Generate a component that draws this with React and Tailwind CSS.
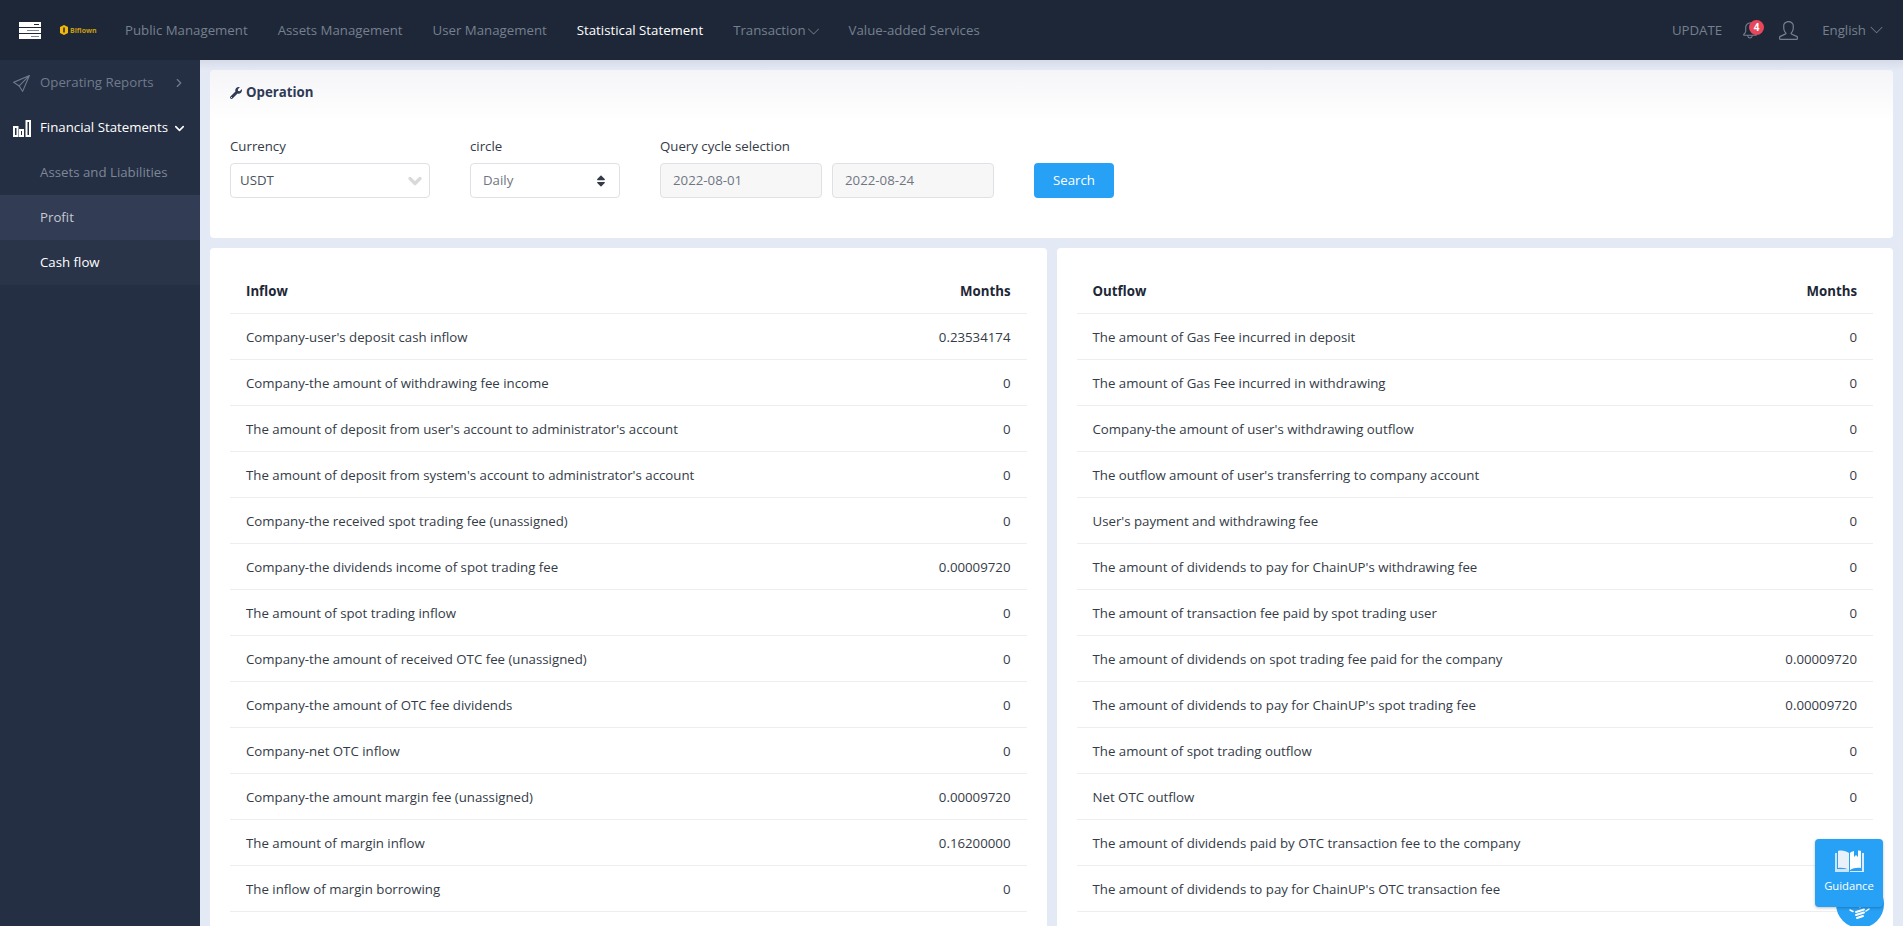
import React from "react";
import { ChevronDown, ChevronRight } from "lucide-react";
import { FaWrench, FaSort } from "react-icons/fa";
import { SlBell, SlUser, SlPaperPlane, SlArrowDown } from "react-icons/sl";

const navItems = [
  { label: "Public Management" },
  { label: "Assets Management" },
  { label: "User Management" },
  { label: "Statistical Statement", active: true },
  { label: "Transaction", arrow: true },
  { label: "Value-added Services" },
];

const inflow = [
  ["Company-user's deposit cash inflow", "0.23534174"],
  ["Company-the amount of withdrawing fee income", "0"],
  ["The amount of deposit from user's account to administrator's account", "0"],
  ["The amount of deposit from system's account to administrator's account", "0"],
  ["Company-the received spot trading fee (unassigned)", "0"],
  ["Company-the dividends income of spot trading fee", "0.00009720"],
  ["The amount of spot trading inflow", "0"],
  ["Company-the amount of received OTC fee (unassigned)", "0"],
  ["Company-the amount of OTC fee dividends", "0"],
  ["Company-net OTC inflow", "0"],
  ["Company-the amount margin fee (unassigned)", "0.00009720"],
  ["The amount of margin inflow", "0.16200000"],
  ["The inflow of margin borrowing", "0"],
];

const outflow = [
  ["The amount of Gas Fee incurred in deposit", "0"],
  ["The amount of Gas Fee incurred in withdrawing", "0"],
  ["Company-the amount of user's withdrawing outflow", "0"],
  ["The outflow amount of user's transferring to company account", "0"],
  ["User's payment and withdrawing fee", "0"],
  ["The amount of dividends to pay for ChainUP's withdrawing fee", "0"],
  ["The amount of transaction fee paid by spot trading user", "0"],
  ["The amount of dividends on spot trading fee paid for the company", "0.00009720"],
  ["The amount of dividends to pay for ChainUP's spot trading fee", "0.00009720"],
  ["The amount of spot trading outflow", "0"],
  ["Net OTC outflow", "0"],
  ["The amount of dividends paid by OTC transaction fee to the company", "0"],
  ["The amount of dividends to pay for ChainUP's OTC transaction fee", "0"],
];

function StatTable({ title, rows }) {
  return (
    <div className="flex-1 bg-white rounded-[4px] p-5">
      <div className="flex justify-between items-center h-[46px] pt-[2px] px-[16px] border-b border-[#eceef1] font-bold text-[#1d2736]">
        <span>{title}</span>
        <span>Months</span>
      </div>
      {rows.map((row) => (
        <div
          key={row[0]}
          className="flex justify-between items-center h-[46px] pt-[2px] px-[16px] border-b border-[#eceef1] text-[#343b47]"
        >
          <span>{row[0]}</span>
          <span>{row[1]}</span>
        </div>
      ))}
    </div>
  );
}

export default function App() {
  return (
    <div className="relative h-screen overflow-hidden bg-[#e4eaf5] font-['Open_Sans',sans-serif] text-[13.25px]">
      {/* header */}
      <div className="flex items-center h-[60px] bg-[#1e2737] text-[#75808f]">
        <div className="w-[22px] ml-[19px] flex flex-col gap-[1px]">
          <svg width="22" height="17" viewBox="0 0 22 17">
            <rect x="0" y="0" width="22" height="5" fill="#fff" />
            <rect x="0" y="6" width="22" height="5" fill="#fff" />
            <rect x="0" y="12" width="22" height="5" fill="#fff" />
            <rect x="15" y="2" width="5" height="1" fill="#1e2737" />
            <rect x="8" y="8" width="12" height="1" fill="#7f8794" />
            <rect x="12" y="14" width="8" height="1" fill="#7f8794" />
          </svg>
        </div>
        <div className="flex items-center ml-[19px] w-[65px] gap-[2px]">
          <svg width="8" height="10" viewBox="0 0 8 10">
            <path d="M4 0l4 2v6l-4 2-4-2V2z" fill="#f1b90c" />
            <rect x="3" y="2.500" width="2" height="5" fill="#5c4a10" />
          </svg>
          <span className="text-[7px] font-bold text-[#c99d12] leading-none">Biflown</span>
        </div>
        <div className="flex items-center gap-[30px] pt-[2px]">
          {navItems.map((item) => (
            <div key={item.label} className={`flex items-center ${item.active ? "text-white" : ""}`}>
              {item.label}
              {item.arrow && <SlArrowDown className="w-[11px] h-[11px] ml-[2px]" />}
            </div>
          ))}
        </div>
        <div className="flex items-center ml-auto">
          <span className="pt-[2px]">UPDATE</span>
          <div className="relative ml-[20px] w-[18px]">
            <SlBell className="w-[16px] h-[17px]" />
            <span className="absolute top-[-2px] left-[7px] w-[15px] h-[15px] rounded-full bg-[#e8465a] text-white text-[10px] font-bold flex items-center justify-center">
              4
            </span>
          </div>
          <SlUser className="ml-[19px] w-[19px] h-[19px]" />
          <span className="ml-[24px] pt-[2px]">English</span>
          <SlArrowDown className="ml-[4px] mr-[20px] w-[13px] h-[12px]" />
        </div>
      </div>

      <div className="flex h-[866px]">
        {/* sidebar */}
        <div className="w-[200px] bg-[#252f43]">
          <div className="flex items-center h-[45px] pl-[13px] pt-[1px] text-[#6f7b8d]">
            <SlPaperPlane className="w-[17px] h-[17px]" />
            <span className="ml-[10px]">Operating Reports</span>
            <ChevronRight className="ml-auto mr-[14px] w-[14px] h-[14px]" />
          </div>
          <div className="flex items-center h-[45px] pl-[13px] pt-[1px] text-white">
            <svg width="18" height="17" viewBox="0 0 18 17" fill="none" stroke="#fff" strokeWidth="2">
              <path d="M1 7h3.500v9H1zM7 10h3v6H7zM13.500 1H17v15h-3.500z" />
            </svg>
            <span className="ml-[9px] whitespace-nowrap">Financial Statements</span>
            <ChevronDown className="ml-auto mr-[13px] w-[15px] h-[15px]" strokeWidth={2.5} />
          </div>
          <div className="flex items-center h-[45px] pl-[40px] pt-[1px] text-[#7d8798]">Assets and Liabilities</div>
          <div className="flex items-center h-[45px] pl-[40px] pt-[1px] bg-[#323c54] text-[#c5cad3]">Profit</div>
          <div className="flex items-center h-[45px] pl-[40px] pt-[1px] bg-[#2a3449] text-white">Cash flow</div>
        </div>

        {/* main */}
        <div className="flex-1 px-[10px] pt-[10px] bg-gradient-to-b from-[#d6dbe7] to-[#e4eaf5] bg-[length:100%_10px] bg-no-repeat">
          <div className="h-[168px] bg-gradient-to-b from-[#f5f5f8] to-white to-[30%] rounded-[4px] p-5">
            <div className="flex items-center gap-[4px] h-[10px] mt-[-2px]">
              <FaWrench className="w-[12px] h-[12px] text-[#2f3a55]" />
              <span className="font-bold text-[#2f3a55]">Operation</span>
            </div>
            <div className="flex items-end gap-[40px] mt-[39px]">
              <div>
                <div className="text-[#343b47] mb-[6px]">Currency</div>
                <div className="flex items-center justify-between w-[200px] h-[35px] pl-[9px] pr-[4px] pt-[2px] bg-white border border-[#dfe1e6] rounded-[4px] text-[#4a5260]">
                  USDT
                  <ChevronDown className="w-[20px] h-[20px] text-[#d9d9d9]" strokeWidth={4} />
                </div>
              </div>
              <div>
                <div className="text-[#343b47] mb-[6px]">circle</div>
                <div className="flex items-center justify-between w-[150px] h-[35px] pl-[12px] pr-[12px] pt-[2px] bg-white border border-[#dfe1e6] rounded-[4px] text-[#6f7683]">
                  Daily
                  <FaSort className="w-[12px] h-[14px] text-[#343b47]" />
                </div>
              </div>
              <div>
                <div className="text-[#343b47] mb-[6px]">Query cycle selection</div>
                <div className="flex gap-[10px]">
                  <div className="flex items-center w-[162px] h-[35px] pl-[12px] pt-[2px] bg-[#f7f7f7] border border-[#dfe1e6] rounded-[4px] text-[#6f7683]">
                    2022-08-01
                  </div>
                  <div className="flex items-center w-[162px] h-[35px] pl-[12px] pt-[2px] bg-[#f7f7f7] border border-[#dfe1e6] rounded-[4px] text-[#6f7683]">
                    2022-08-24
                  </div>
                </div>
              </div>
              <button className="w-[80px] h-[35px] pt-[2px] rounded-[4px] bg-[#27a1f5] text-white">Search</button>
            </div>
          </div>
          <div className="flex gap-[10px] mt-[10px]">
            <StatTable title="Inflow" rows={inflow} />
            <StatTable title="Outflow" rows={outflow} />
          </div>
        </div>
      </div>

      {/* guidance float */}
      <div className="absolute left-[1836px] top-[880px] w-[48px] h-[48px] rounded-full bg-[#27a1f5] flex justify-center pt-[24px]">
        <svg width="22" height="18" viewBox="0 0 22 18" fill="none" stroke="#fff" strokeWidth="1.500" strokeLinecap="round">
          <path d="M1 6l3 1.500M11 1v2M20 5l-3 2" />
          <path d="M7 8l8-2.500M7 11l8-2.500M8 14l6-2" strokeWidth="2" />
        </svg>
      </div>
      <div className="absolute left-[1815px] top-[839px] w-[68px] h-[68px] rounded-[4px] bg-[#27a1f5] shadow-[0_1px_3px_rgba(0,0,0,0.25)] flex flex-col items-center pt-[11px] text-white text-[11.25px]">
        <svg width="29" height="22" viewBox="0 0 29 22">
          <path d="M0 3h2v16h12v3H0z" fill="#cfe3f7" />
          <path d="M3 1c4-1 8 0 11 2v17c-3-2-7-2.500-11-2z" fill="#e8f1fa" />
          <path d="M15 3c1-1 2-1.500 4-2v6l2-2 2 2V0.500c1.500 0 2.500 .2 3 .5v17c-4-.5-8 0-11 2z" fill="#fff" />
          <path d="M27 3h2v19H15v-1h12z" fill="#dceafa" />
        </svg>
        <span className="mt-[6px]">Guidance</span>
      </div>
    </div>
  );
}
